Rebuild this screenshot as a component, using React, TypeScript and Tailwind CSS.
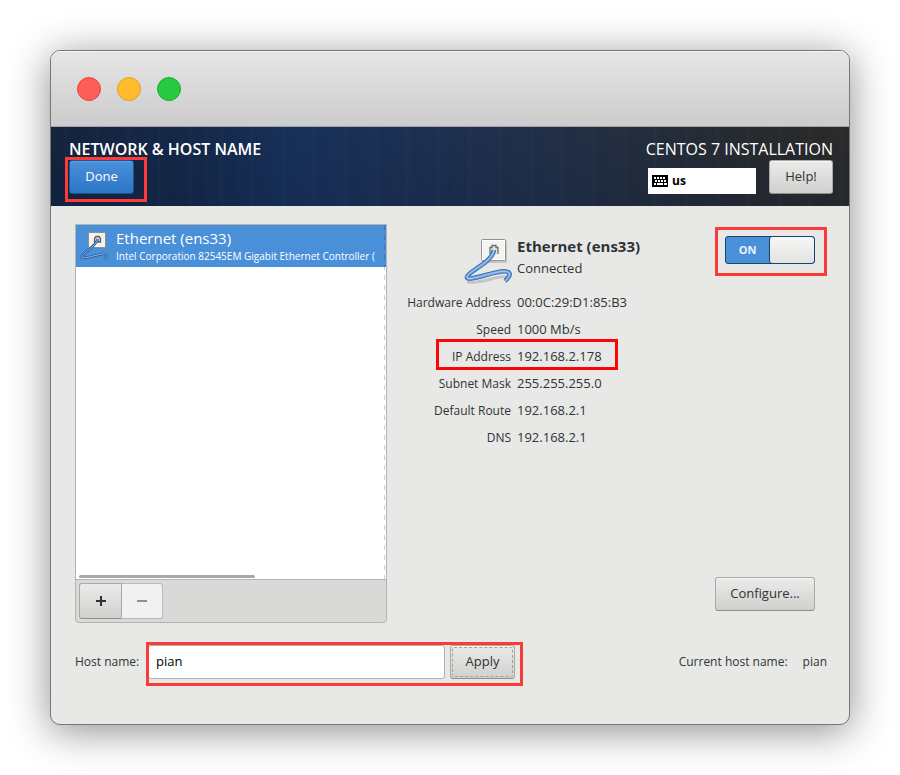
import type { ReactNode } from "react";

const buttonBase =
  "rounded-[3px] border border-[#a8a8a5] border-b-[#8f8f8c] bg-linear-to-b from-[#ebebe9] to-[#d0d0ce] shadow-[inset_0_1px_0_#f8f8f8] text-[#2e3436]";

function EthernetIcon() {
  return (
    <svg viewBox="0 0 48 48" className="size-12 overflow-visible" aria-hidden="true">
      <rect x="19" y="4" width="25" height="23" rx="1.5" fill="#000" opacity="0.15" />
      <rect x="18.5" y="3.5" width="24" height="21" rx="1" fill="#f3f3f2" stroke="#92928e" />
      <rect x="19.5" y="4.500" width="22" height="19" fill="none" stroke="#fff" />
      <path d="M27 18V11.500H29V9.500H33V11.500H35V18" fill="#e4e4e1" stroke="#6b6b67" strokeWidth="1.300" />
      <path d="M4 46C16 49 37 38 45 41" fill="none" stroke="#000" strokeWidth="3" opacity="0.15" />
      <g fill="none" strokeLinejoin="round">
        <path d="M31 14C29 27 5 35 4 41C3 46 27 37 38 35.500C47 34.500 50 38 42 45" stroke="#2f66ad" strokeWidth="4.600" />
        <path d="M31 14C29 27 5 35 4 41C3 46 27 37 38 35.500C47 34.500 50 38 42 45" stroke="#6c9edb" strokeWidth="3" />
        <path d="M31 14C29 27 5 35 4 41C3 46 27 37 38 35.500C47 34.500 50 38 42 45" stroke="#b5d0f1" strokeWidth="1" />
      </g>
    </svg>
  );
}

function SmallEthernetIcon() {
  return (
    <svg viewBox="0 0 32 32" className="size-8 shrink-0" aria-hidden="true">
      <rect x="8.500" y="2.500" width="17" height="15" fill="#f3f3ef" stroke="#908f86" />
      <path d="M14.500 12V8.500L16 6.500H19L20.500 8.500V12Z" fill="#dcdcd8" stroke="#5c5c58" strokeWidth="1.300" />
      <g fill="none" strokeLinejoin="round">
        <path d="M18 9C15 17 2 24 1.500 27C1 30 19 24 23 24C28 24 28 26 25 29" stroke="#2d5f9f" strokeWidth="2.600" />
        <path d="M18 9C15 17 2 24 1.500 27C1 30 19 24 23 24C28 24 28 26 25 29" stroke="#8ab4e6" strokeWidth="1" />
      </g>
    </svg>
  );
}

function KeyboardIcon() {
  return (
    <svg width="16" height="12" viewBox="0 0 16 12" aria-hidden="true" shapeRendering="crispEdges">
      <rect width="16" height="12" rx="1" fill="#000" />
      <path
        d="M2 2h2v2H2zM5 2h2v2H5zM8 2h2v2H8zM11 2h2v2h-2zM3 5h2v2H3zM6 5h2v2H6zM9 5h2v2H9zM12 5h2v2h-2zM2 8h2v2H2zM5 8h6v2H5zM12 8h3v2h-3z"
        fill="#fff"
      />
    </svg>
  );
}

function Marked({ box, className = "", children }: { box: string; className?: string; children: ReactNode }) {
  return (
    <div className={`relative ${className}`}>
      {children}
      <span className={`pointer-events-none absolute border-3 ${box}`} />
    </div>
  );
}

const details = [
  ["Hardware Address", "00:0C:29:D1:85:B3"],
  ["Speed", "1000 Mb/s"],
  ["IP Address", "192.168.2.178"],
  ["Subnet Mask", "255.255.255.0"],
  ["Default Route", "192.168.2.1"],
  ["DNS", "192.168.2.1"],
];

function Header() {
  return (
    <header className="flex justify-between bg-[repeating-linear-gradient(90deg,transparent_0px,transparent_13px,#ffffff04_15px,transparent_18px,#00000008_27px,transparent_31px),linear-gradient(180deg,transparent,#0d193933),linear-gradient(90deg,#14243d_0%,#15294a_18%,#17315b_30%,#1d3051_48%,#212f48_62%,#242d3a_77%,#292a2c_92%,#2b2b2b_100%)] pt-3 pr-4 pb-3 pl-[18px] text-white">
      <div>
        <h1 className="text-[16px] leading-[21px] font-semibold">NETWORK &amp; HOST NAME</h1>
        <Marked className="w-[65px]" box="-top-[3px] -left-1 h-[45px] w-[82px] border-[#fb3a3a]">
          <button className="h-[34px] w-full rounded-[3px] border border-[#1c548f] bg-linear-to-b from-[#4a90d9] to-[#2a76c6] text-[13px] text-white shadow-[inset_0_1px_0_#63a1e1]">
            Done
          </button>
        </Marked>
      </div>
      <div>
        <p className="text-[16px] leading-[21px]">CENTOS 7 INSTALLATION</p>
        <div className="flex items-end justify-end gap-[13px]">
          <button className="flex h-[26px] w-[108px] items-center gap-1 bg-white pl-1 text-[12px] font-bold text-black">
            <KeyboardIcon />
            us
          </button>
          <button className={`${buttonBase} h-[34px] w-16 text-[13px]`}>Help!</button>
        </div>
      </div>
    </header>
  );
}

function DeviceList() {
  return (
    <section className="flex w-[312px] shrink-0 flex-col overflow-hidden rounded-b-[4px] border border-[#b3b3b0] bg-[#d9d9d7]">
      <div className="relative flex h-[355px] flex-col justify-between border-b border-[#b3b3b0] bg-white">
        <button className="flex h-[42px] w-full items-center gap-1 bg-[#4a90d9] pl-1 text-left whitespace-nowrap text-white">
          <SmallEthernetIcon />
          <span>
            <span className="block text-[15px] leading-5">Ethernet (ens33)</span>
            <span className="block text-[10px] leading-4">Intel Corporation 82545EM Gigabit Ethernet Controller (</span>
          </span>
        </button>
        <div className="mb-px ml-[3px] h-[3px] w-[176px] rounded-full bg-[#a5a9a9]" />
        <span className="absolute top-0 right-px h-full w-px bg-[repeating-linear-gradient(180deg,#00000030_0px,#00000030_5px,transparent_5px,transparent_10px)]" />
      </div>
      <div className="flex h-[42px] p-[3px]">
        <button aria-label="Add device" className="flex h-9 w-[43px] items-center justify-center rounded-l-[3px] border border-[#a8a8a5] border-b-[#8f8f8c] bg-linear-to-b from-[#ebebe9] to-[#d0d0ce]">
          <svg width="10" height="10" viewBox="0 0 10 10" aria-hidden="true"><path d="M0 5H10M5 0V10" stroke="#2e3436" strokeWidth="2" /></svg>
        </button>
        <button disabled aria-label="Remove device" className="flex h-9 w-[41px] items-center justify-center rounded-r-[3px] border border-l-0 border-[#b9b9b6] bg-[#f1f1f1]">
          <svg width="10" height="10" viewBox="0 0 10 10" aria-hidden="true"><path d="M0 5H10" stroke="#8d9091" strokeWidth="2" /></svg>
        </button>
      </div>
    </section>
  );
}

function DevicePanel() {
  return (
    <section className="flex grow flex-col pr-3 pl-[18px]">
      <div className="flex items-start pt-3">
        <div className="flex w-[106px] justify-end">
          <EthernetIcon />
        </div>
        <div className="ml-1.5 grow">
          <h2 className="text-[15px] leading-5 font-bold">Ethernet (ens33)</h2>
          <p className="leading-6">Connected</p>
        </div>
        <Marked box="-top-[9px] -left-[10px] h-[49px] w-28 border-[#fb3a3a]">
          <label className="flex h-7 w-[90px] overflow-hidden rounded-[3px] border border-[#184472] bg-[#4a90d9]">
            <input type="checkbox" role="switch" aria-label="Ethernet connection" defaultChecked className="sr-only" />
            <span className="flex w-[43px] items-center justify-center text-[11px] font-bold text-[#eaf2fb]">ON</span>
            <span className="grow rounded-[3px] border-l border-[#184472] bg-linear-to-b from-[#f7f7f6] to-[#e2e2df]" />
          </label>
        </Marked>
      </div>
      <dl className="mt-[5px]">
        {details.map(([name, value]) => (
          <div key={name} className="relative flex h-[27px] items-center gap-1.5">
            <dt className="w-[106px] text-right text-[12px] whitespace-nowrap">{name}</dt>
            <dd>{value}</dd>
            {name === "IP Address" && (
              <span className="pointer-events-none absolute -top-1 left-[31px] h-[31px] w-[182px] border-3 border-[#fb0505]" />
            )}
          </div>
        ))}
      </dl>
      <button className={`${buttonBase} mt-auto mb-3 h-[34px] w-[100px] self-end`}>Configure...</button>
    </section>
  );
}

export default function App() {
  return (
    <div className="bg-white px-[50px] py-[50px] font-['Open_Sans','Noto_Sans',sans-serif] text-[13px] text-[#2e3436]">
      <main className="overflow-hidden rounded-[10px] border border-[#777] bg-[#e8e8e6] shadow-[0_6px_40px_#00000073]">
        <div className="flex h-[76px] items-center gap-4 border-b border-[#a4a4a4] bg-linear-to-b from-[#e6e6e6] to-[#cccccc] px-[26px] shadow-[inset_0_1px_0_#f5f5f5]">
          <span className="size-6 rounded-full border border-[#e2463f] bg-[#ff5f57]" />
          <span className="size-6 rounded-full border border-[#dfa023] bg-[#ffbd2e]" />
          <span className="size-6 rounded-full border border-[#1dad2b] bg-[#28ca42]" />
        </div>
        <Header />
        <div className="pt-[18px] pr-[22px] pb-[45px] pl-6">
          <div className="flex">
            <DeviceList />
            <DevicePanel />
          </div>
          <div className="mt-[22px] flex items-center justify-between">
            <div className="flex items-center">
              <label htmlFor="host" className="w-[73px] text-[12px] whitespace-nowrap">Host name:</label>
              <Marked className="flex gap-[5px]" box="-top-[3px] -left-[2px] h-11 w-[377px] border-[#fb3a3a]">
                <input
                  id="host"
                  defaultValue="pian"
                  className="h-[34px] w-[297px] rounded-[3px] border border-[#b0b0ad] bg-white px-[7px] pb-0.5 text-[13px] text-black outline-none"
                />
                <button className={`${buttonBase} h-[34px] w-[65px] p-px`}>
                  <span className="flex h-full items-center justify-center rounded-xs border border-dashed border-[#a0a09d]">Apply</span>
                </button>
              </Marked>
            </div>
            <p className="flex gap-[15px] text-[12px]">
              <span>Current host name:</span>
              <span>pian</span>
            </p>
          </div>
        </div>
      </main>
    </div>
  );
}
